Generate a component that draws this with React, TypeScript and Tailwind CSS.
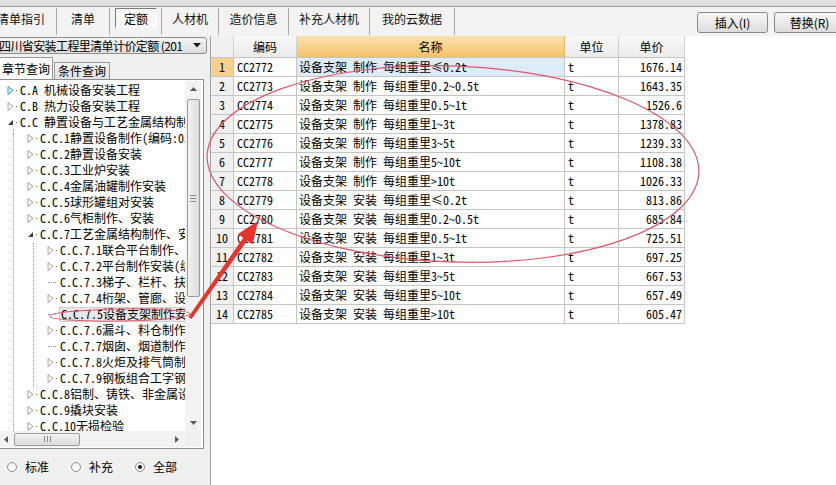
import React from "react";

const mono = "font-['Noto_Sans_Mono_CJK_SC','Noto_Sans_CJK_SC',monospace]";

const rows = [
  ["CC2772", "设备支架 制作 每组重里≤0.2t", "1676.14"],
  ["CC2773", "设备支架 制作 每组重里0.2~0.5t", "1643.35"],
  ["CC2774", "设备支架 制作 每组重里0.5~1t", "1526.6"],
  ["CC2775", "设备支架 制作 每组重里1~3t", "1378.83"],
  ["CC2776", "设备支架 制作 每组重里3~5t", "1239.33"],
  ["CC2777", "设备支架 制作 每组重里5~10t", "1108.38"],
  ["CC2778", "设备支架 制作 每组重里>10t", "1026.33"],
  ["CC2779", "设备支架 安装 每组重里≤0.2t", "813.86"],
  ["CC2780", "设备支架 安装 每组重里0.2~0.5t", "685.84"],
  ["CC2781", "设备支架 安装 每组重里0.5~1t", "725.51"],
  ["CC2782", "设备支架 安装 每组重里1~3t", "697.25"],
  ["CC2783", "设备支架 安装 每组重里3~5t", "667.53"],
  ["CC2784", "设备支架 安装 每组重里5~10t", "657.49"],
  ["CC2785", "设备支架 安装 每组重里>10t", "605.47"],
];

type Node = { lv: number; t: "c" | "o" | "l"; txt: string; blue?: boolean; sel?: boolean };

const tree: Node[] = [
  { lv: 0, t: "c", txt: "C.A 机械设备安装工程", blue: true },
  { lv: 0, t: "c", txt: "C.B 热力设备安装工程" },
  { lv: 0, t: "o", txt: "C.C 静置设备与工艺金属结构制作安装工程" },
  { lv: 1, t: "c", txt: "C.C.1静置设备制作(编码:030801)" },
  { lv: 1, t: "c", txt: "C.C.2静置设备安装" },
  { lv: 1, t: "c", txt: "C.C.3工业炉安装" },
  { lv: 1, t: "c", txt: "C.C.4金属油罐制作安装" },
  { lv: 1, t: "c", txt: "C.C.5球形罐组对安装" },
  { lv: 1, t: "c", txt: "C.C.6气柜制作、安装" },
  { lv: 1, t: "o", txt: "C.C.7工艺金属结构制作、安装" },
  { lv: 2, t: "c", txt: "C.C.7.1联合平台制作、安装" },
  { lv: 2, t: "c", txt: "C.C.7.2平台制作安装(编码:030807)" },
  { lv: 2, t: "l", txt: "C.C.7.3梯子、栏杆、扶手制作安装" },
  { lv: 2, t: "c", txt: "C.C.7.4桁架、管廊、设备框架" },
  { lv: 2, t: "l", txt: "C.C.7.5设备支架制作安装", sel: true },
  { lv: 2, t: "c", txt: "C.C.7.6漏斗、料仓制作安装" },
  { lv: 2, t: "l", txt: "C.C.7.7烟囱、烟道制作安装" },
  { lv: 2, t: "c", txt: "C.C.7.8火炬及排气筒制作安装" },
  { lv: 2, t: "c", txt: "C.C.7.9钢板组合工字钢制作" },
  { lv: 1, t: "c", txt: "C.C.8铝制、铸铁、非金属设备安装" },
  { lv: 1, t: "c", txt: "C.C.9撬块安装" },
  { lv: 1, t: "c", txt: "C.C.10无损检验" },
];

const tabs = [
  { label: "清单指引", w: "w-[71px]" },
  { label: "清单", w: "w-[53px]" },
  { label: "定额", w: "w-[52px]", on: true },
  { label: "人材机", w: "w-[57px]" },
  { label: "造价信息", w: "w-[70px]" },
  { label: "补充人材机", w: "w-[81px]" },
  { label: "我的云数据", w: "w-[85px]" },
];

function Arrow({ node }: { node: Node }) {
  if (node.t === "o")
    return (
      <svg width="7" height="9" className="shrink-0">
        <path d="M6 2 L6 7 L1 7 Z" fill="#3c3c3c" />
      </svg>
    );
  return (
    <svg width="7" height="9" className="shrink-0">
      <path
        d="M1 0.5 L6 4.5 L1 8.5 Z"
        fill={node.blue ? "#d6eefc" : "#ffffff"}
        stroke={node.blue ? "#2f9be6" : "#a2a2a2"}
        strokeWidth="1"
      />
    </svg>
  );
}

function TreeRow({ node }: { node: Node }) {
  const pad = node.lv === 0 ? "pl-[9px]" : node.lv === 1 ? "pl-[29px]" : "pl-[49px]";
  return (
    <div className={`flex items-center h-[16px] ${pad}`}>
      {node.t === "l" ? (
        <span className="w-[8px] ml-[1px] mr-[4px] h-0 border-t border-dotted border-[#9a9a9a] shrink-0" />
      ) : (
        <>
          <Arrow node={node} />
          <span className="w-[6px] flex items-center shrink-0">
            <span className="w-[1px] h-[1px] ml-[2px] bg-[#808080]" />
          </span>
        </>
      )}
      {node.sel ? (
        <span className="h-[15px] -ml-[1px] pl-[1px] pr-[40px] flex items-center bg-[#e8e8e8] border border-[#d2d2d2] whitespace-nowrap leading-[16px]">
          {node.txt}
        </span>
      ) : (
        <span className="whitespace-nowrap leading-[16px]">{node.txt}</span>
      )}
    </div>
  );
}

function Radio({ label, on }: { label: string; on?: boolean }) {
  return (
    <div className="flex items-center gap-[8px]">
      <span className="w-[10px] h-[10px] rounded-full border border-[#8e8f8f] bg-linear-to-b from-[#f2f2f2] to-[#ffffff] flex items-center justify-center">
        {on && <span className="w-[4px] h-[4px] rounded-full bg-[#1a1a1a]" />}
      </span>
      <span className="text-[12px] leading-[16px]">{label}</span>
    </div>
  );
}

export default function App() {
  return (
    <div className="relative w-[836px] h-[485px] overflow-hidden bg-[#f0f0f0] text-[12px] text-black font-['Noto_Sans_CJK_SC',sans-serif]">
      {/* window top */}
      <div className="h-[7px] bg-linear-to-b from-[#e6e6e6] to-[#d8d8d8] border-b border-[#9c9c9c]" />

      {/* tab bar + buttons */}
      <div className="flex h-[29px] bg-[#f3f3f3]">
        <div className="flex h-[27px] mt-[1px] -ml-[14px]">
          {tabs.map((t) => (
            <div key={t.label} className={`${t.w} h-full border-r border-[#a8a8a8] flex justify-center`}>
              {t.on ? (
                <div className="mr-auto ml-[5px] w-[42px] h-[20px] border border-t-[#7c7c7c] border-l-[#7c7c7c] border-r-white border-b-white bg-[#f8f8f8] flex items-center justify-center leading-[16px] pt-[2px]">
                  {t.label}
                </div>
              ) : (
                <span className="pt-[3px] leading-[16px] text-[#111]">{t.label}</span>
              )}
            </div>
          ))}
        </div>
        <div className="ml-auto -mr-[9px] flex gap-[6px] pt-[5px]">
          <div className="w-[71px] h-[21px] rounded-[3px] border border-[#8a8a8a] bg-linear-to-b from-[#f7f7f7] to-[#dcdcdc] flex items-center justify-center">
            插入(I)
          </div>
          <div className="w-[71px] h-[21px] rounded-[3px] border border-[#8a8a8a] bg-linear-to-b from-[#f7f7f7] to-[#dcdcdc] flex items-center justify-center">
            替换(R)
          </div>
        </div>
      </div>

      {/* main */}
      <div className="flex h-[449px]">
        {/* left panel */}
        <div className="-ml-[3px] w-[210px] flex flex-col">
          <div className="h-[18px] pt-[1px]">
            <div className="h-[17px] rounded-[3px] border border-[#8e8f8f] bg-linear-to-b from-[#f4f4f4] to-[#dedede] flex items-center pr-[5px] overflow-hidden">
              <span className="whitespace-nowrap flex-1 ml-[1px] leading-[15px] tracking-[-0.6px] overflow-hidden">四川省安装工程里清单计价定额 (201</span>
              <svg width="8" height="5" className="shrink-0 ml-[4px]">
                <path d="M0 0 L8 0 L4 4.5 Z" fill="#1a1a1a" />
              </svg>
            </div>
          </div>

          <div className="h-[25px] flex items-end">
            <div className="w-[56px] h-[22px] bg-white border border-b-0 border-[#9a9a9a] flex items-center justify-center whitespace-nowrap leading-[16px] pl-[2px]">
              章节查询
            </div>
            <div className="w-[56px] h-[17px] ml-[1px] border border-b-0 border-[#9a9a9a] bg-linear-to-b from-[#f4f4f4] to-[#e2e2e2] flex items-center justify-center whitespace-nowrap leading-[16px]">
              条件查询
            </div>
          </div>

          <div className="w-[207px] h-[370px] border border-[#8e8e8e] bg-white pt-[1px] pb-[1px] pr-[2px] flex flex-col">
            <div className="flex h-[350px]">
              <div className={`relative w-[187px] h-full overflow-hidden pt-[1px] ${mono}`}>
                <span className="absolute left-[15px] top-[48px] bottom-0 border-l border-dotted border-[#9a9a9a]" />
                <span className="absolute left-[35px] top-[162px] h-[144px] border-l border-dotted border-[#9a9a9a]" />
                {tree.map((n) => (
                  <TreeRow key={n.txt} node={n} />
                ))}
              </div>
              {/* vertical scrollbar */}
              <div className="w-[16px] h-full bg-[#f3f3f3] flex flex-col items-center">
                <div className="h-[16px] flex items-center justify-center">
                  <svg width="7" height="4"><path d="M0 4 L7 4 L3.5 0 Z" fill="#5a5a5a" /></svg>
                </div>
                <div className="mt-[2px] w-[13px] h-[198px] rounded-[2px] border border-[#9b9b9b] bg-linear-to-r from-[#f2f2f2] to-[#dcdcdc] flex flex-col items-center justify-center gap-[2px]">
                  <span className="w-[6px] h-px bg-[#8a8a8a]" />
                  <span className="w-[6px] h-px bg-[#8a8a8a]" />
                  <span className="w-[6px] h-px bg-[#8a8a8a]" />
                </div>
                <div className="mt-auto h-[16px] flex items-center justify-center">
                  <svg width="7" height="4"><path d="M0 0 L7 0 L3.5 4 Z" fill="#5a5a5a" /></svg>
                </div>
              </div>
            </div>
            {/* horizontal scrollbar */}
            <div className="flex h-[16px]">
              <div className="w-[187px] h-full bg-[#f3f3f3] flex items-center">
                <div className="w-[16px] flex justify-center">
                  <svg width="4" height="7"><path d="M4 0 L4 7 L0 3.5 Z" fill="#5a5a5a" /></svg>
                </div>
                <div className="w-[66px] h-[13px] rounded-[2px] border border-[#9b9b9b] bg-linear-to-b from-[#f2f2f2] to-[#dcdcdc] flex items-center justify-center gap-[2px]">
                  <span className="w-px h-[6px] bg-[#8a8a8a]" />
                  <span className="w-px h-[6px] bg-[#8a8a8a]" />
                  <span className="w-px h-[6px] bg-[#8a8a8a]" />
                </div>
                <div className="ml-auto w-[16px] flex justify-center">
                  <svg width="4" height="7"><path d="M0 0 L0 7 L4 3.5 Z" fill="#5a5a5a" /></svg>
                </div>
              </div>
              <div className="w-[16px] h-full bg-[#f0f0f0]" />
            </div>
          </div>

          <div className="flex-1 flex items-center pl-[10px] gap-[22px]">
            <Radio label="标准" />
            <Radio label="补充" />
            <Radio label="全部" on />
          </div>
        </div>

        {/* right panel */}
        <div className="ml-[3px] flex-1 bg-white border-l border-[#a0a0a0]">
          <div className={`w-[474px] flex flex-col ${mono}`}>
            <div className="flex h-[22px] border-b border-[#c5c5c5] font-['Noto_Sans_CJK_SC',sans-serif]">
              <div className="w-[23px] border-r border-[#d0d0d0] bg-[#f0f0f0]" />
              <div className="w-[63px] border-r border-[#d0d0d0] bg-linear-to-b from-[#f8f8f8] to-[#ebebeb] flex items-center justify-center">编码</div>
              <div className="w-[268px] border-r border-[#e0b870] bg-linear-to-b from-[#fbe2b2] to-[#f4c264] flex items-center justify-center">名称</div>
              <div className="w-[54px] border-r border-[#d0d0d0] bg-linear-to-b from-[#f8f8f8] to-[#ebebeb] flex items-center justify-center">单位</div>
              <div className="w-[66px] border-r border-[#d0d0d0] bg-linear-to-b from-[#f8f8f8] to-[#ebebeb] flex items-center justify-center">单价</div>
            </div>
            {rows.map((r, i) => (
              <div key={r[0]} className="flex h-[19px] border-b border-[#c5c5c5] leading-[18px]">
                <div className={`w-[23px] border-r border-[#c5c5c5] text-center ${i === 0 ? "bg-[#f9d08c]" : "bg-[#f0f0f0]"}`}>
                  {i + 1}
                </div>
                <div className="w-[63px] border-r border-[#c5c5c5] pl-[3px] whitespace-nowrap">{r[0]}</div>
                <div className={`w-[268px] border-r border-[#c5c5c5] pl-[2px] whitespace-nowrap ${i === 0 ? "bg-[#deebf9]" : ""}`}>
                  {r[1]}
                </div>
                <div className="w-[54px] border-r border-[#c5c5c5] pl-[3px]">t</div>
                <div className="w-[66px] border-r border-[#c5c5c5] pr-[2px] text-right">{r[2]}</div>
              </div>
            ))}
          </div>
        </div>
      </div>

      {/* red annotations drawn over the screenshot */}
      <svg className="absolute inset-0 pointer-events-none" width="836" height="485">
        <ellipse cx="453" cy="164" rx="246" ry="98" transform="rotate(2 453 164)" fill="none" stroke="#e2566a" strokeWidth="1.2" />
        <ellipse cx="120" cy="315" rx="70" ry="6" transform="rotate(-1 120 315)" fill="none" stroke="#e2566a" strokeWidth="1" />
        <polygon
          points="188.5,317 243.2,237.7 237.9,233.9 258,221 252.7,244.3 247.4,240.5 191.5,319"
          fill="#e8332e"
        />
      </svg>
    </div>
  );
}
